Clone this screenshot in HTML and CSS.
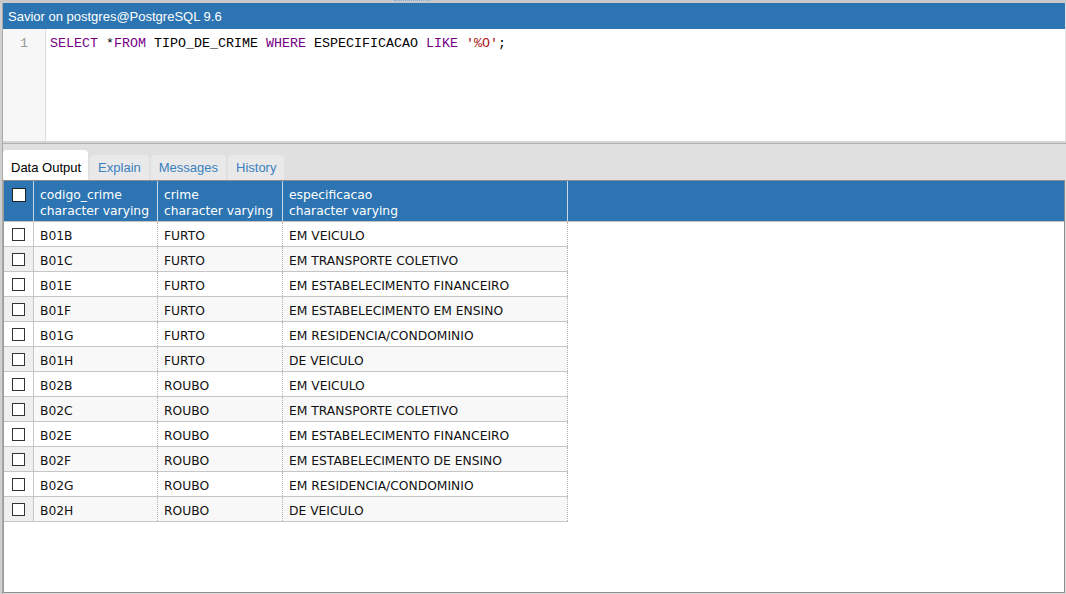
FILE: index.html
```html
<!DOCTYPE html>
<html>
<head>
<meta charset="utf-8">
<link rel="stylesheet" href="styles.css">
</head>
<body>
<div class="splitter-top"><span class="handle"></span></div>
<div class="panel">
  <div class="titlebar">Savior on postgres@PostgreSQL 9.6</div>
  <div class="editor">
    <div class="gutter"><div class="lineno">1</div></div>
    <div class="code"><span class="kw">SELECT</span> *<span class="kw">FROM</span> TIPO_DE_CRIME <span class="kw">WHERE</span> ESPECIFICACAO <span class="kw">LIKE</span> <span class="str">'%O'</span>;</div>
  </div>
  <div class="hsplit"></div>
  <div class="tabbar">
    <div class="tab active">Data Output</div>
    <div class="tab">Explain</div>
    <div class="tab">Messages</div>
    <div class="tab">History</div>
  </div>
  <div class="grid">
    <div class="ghead">
      <div class="hcell c0"><span class="cb hcb"></span></div>
      <div class="hcell c1">codigo_crime<br>character varying</div>
      <div class="hcell c2">crime<br>character varying</div>
      <div class="hcell c3">especificacao<br>character varying</div>
      <div class="hfill"></div>
    </div>
    <div class="gbody">
      <div class="row"><div class="cell c0"><span class="cb"></span></div><div class="cell c1">B01B</div><div class="cell c2">FURTO</div><div class="cell c3">EM VEICULO</div></div>
      <div class="row"><div class="cell c0"><span class="cb"></span></div><div class="cell c1">B01C</div><div class="cell c2">FURTO</div><div class="cell c3">EM TRANSPORTE COLETIVO</div></div>
      <div class="row"><div class="cell c0"><span class="cb"></span></div><div class="cell c1">B01E</div><div class="cell c2">FURTO</div><div class="cell c3">EM ESTABELECIMENTO FINANCEIRO</div></div>
      <div class="row"><div class="cell c0"><span class="cb"></span></div><div class="cell c1">B01F</div><div class="cell c2">FURTO</div><div class="cell c3">EM ESTABELECIMENTO EM ENSINO</div></div>
      <div class="row"><div class="cell c0"><span class="cb"></span></div><div class="cell c1">B01G</div><div class="cell c2">FURTO</div><div class="cell c3">EM RESIDENCIA/CONDOMINIO</div></div>
      <div class="row"><div class="cell c0"><span class="cb"></span></div><div class="cell c1">B01H</div><div class="cell c2">FURTO</div><div class="cell c3">DE VEICULO</div></div>
      <div class="row"><div class="cell c0"><span class="cb"></span></div><div class="cell c1">B02B</div><div class="cell c2">ROUBO</div><div class="cell c3">EM VEICULO</div></div>
      <div class="row"><div class="cell c0"><span class="cb"></span></div><div class="cell c1">B02C</div><div class="cell c2">ROUBO</div><div class="cell c3">EM TRANSPORTE COLETIVO</div></div>
      <div class="row"><div class="cell c0"><span class="cb"></span></div><div class="cell c1">B02E</div><div class="cell c2">ROUBO</div><div class="cell c3">EM ESTABELECIMENTO FINANCEIRO</div></div>
      <div class="row"><div class="cell c0"><span class="cb"></span></div><div class="cell c1">B02F</div><div class="cell c2">ROUBO</div><div class="cell c3">EM ESTABELECIMENTO DE ENSINO</div></div>
      <div class="row"><div class="cell c0"><span class="cb"></span></div><div class="cell c1">B02G</div><div class="cell c2">ROUBO</div><div class="cell c3">EM RESIDENCIA/CONDOMINIO</div></div>
      <div class="row"><div class="cell c0"><span class="cb"></span></div><div class="cell c1">B02H</div><div class="cell c2">ROUBO</div><div class="cell c3">DE VEICULO</div></div>
    </div>
  </div>
</div>
</body>
</html>
```

FILE: styles.css
```css
* { box-sizing: border-box; }
html, body { margin: 0; padding: 0; }
body {
  width: 1066px;
  height: 594px;
  overflow: hidden;
  background: #d0d0d0;
  font-family: "Liberation Sans", Arial, sans-serif;
  font-size: 13px;
}
.splitter-top {
  height: 3px;
  background: #c9c9c9;
  display: flex;
  justify-content: center;
}
.handle {
  width: 36px;
  height: 1px;
  margin-left: -242px;
  border-top: 1px dotted #7fb0e0;
}
.panel {
  height: 591px;
  margin-left: 2px;
  border-left: 1px solid #a9a9a9;
  display: flex;
  flex-direction: column;
  background: #e0e0e0;
}
.titlebar {
  height: 26px;
  flex: none;
  background: #2c75b2;
  color: #fff;
  padding: 0 0 0 5px;
  line-height: 27px;
  font-size: 13px;
  margin-right: 1px;
}
.editor {
  height: 112px;
  flex: none;
  display: flex;
  background: #fff;
  margin-right: 1px;
}
.gutter {
  width: 43px;
  background: #f7f7f7;
  border-right: 1px solid #dddddd;
  padding-top: 7px;
}
.lineno {
  font-family: "Liberation Mono", "Courier New", monospace;
  font-size: 13.33px;
  line-height: 16px;
  color: #999;
  text-align: right;
  padding-right: 17px;
}
.code {
  font-family: "Liberation Mono", "Courier New", monospace;
  font-size: 13.33px;
  line-height: 16px;
  color: #000;
  padding: 7px 0 0 4px;
  white-space: pre;
}
.kw { color: #770088; }
.str { color: #aa1111; }
.hsplit {
  height: 3px;
  flex: none;
  background: #d6d6d6;
  border-bottom: 1px solid #b0b0b0;
}
.tabbar {
  height: 36px;
  flex: none;
  display: flex;
  align-items: flex-end;
  gap: 2px;
  background: #e0e0e0;
}
.tab {
  height: 25px;
  line-height: 26px;
  padding: 0 8px;
  background: #e9e9e9;
  color: #3b80c0;
  border-radius: 4px 4px 0 0;
  font-size: 13px;
}
.tab.active {
  background: #fff;
  color: #000;
  padding: 5px 7px 0 8px;
  height: 30px;
}
.grid {
  flex: 1;
  background: #fff;
  border: 1px solid #8c8c8c;
  border-left: 1px solid #9a9a9a;
  margin-right: 1px;
  margin-bottom: 1px;
  font-family: "DejaVu Sans", Verdana, sans-serif;
  font-size: 12.3px;
}
.ghead {
  display: flex;
  height: 41px;
  background: #2c75b2;
  border-bottom: 1px solid #c4c4c4;
  color: #fff;
}
.hcell {
  border-right: 1px solid #c9d6e3;
  padding: 6px 0 0 6px;
  line-height: 16px;
  white-space: nowrap;
}
.hfill { flex: 1; }
.c0 { width: 30px; flex: none; }
.c1 { width: 124px; flex: none; }
.c2 { width: 125px; flex: none; }
.c3 { width: 285px; flex: none; }
.hcell.c0 {
  display: flex;
  justify-content: center;
  align-items: flex-start;
  padding: 7px 0 0 0;
}
.cb {
  display: block;
  width: 13px;
  height: 13px;
  background: #fff;
  border: 1px solid #333;
}
.hcb { border-color: #222; width: 14px; height: 14px; }
.gbody { width: 564px; }
.row {
  display: flex;
  height: 25px;
  border-bottom: 1px solid #c6c6c6;
  background: #fff;
  color: #111;
}
.row:nth-child(even) { background: #f8f8f8; }
.cell {
  line-height: 24px;
  padding: 2px 0 0 6px;
  white-space: nowrap;
  border-right: 1px dotted #b5b5b5;
}
.cell.c0 {
  padding: 1px 0 0 0;
  display: flex;
  align-items: center;
  justify-content: center;
  border-right: 1px solid #c6c6c6;
}
.row:nth-child(even) .cell.c0 { background: #efefef; }
```
